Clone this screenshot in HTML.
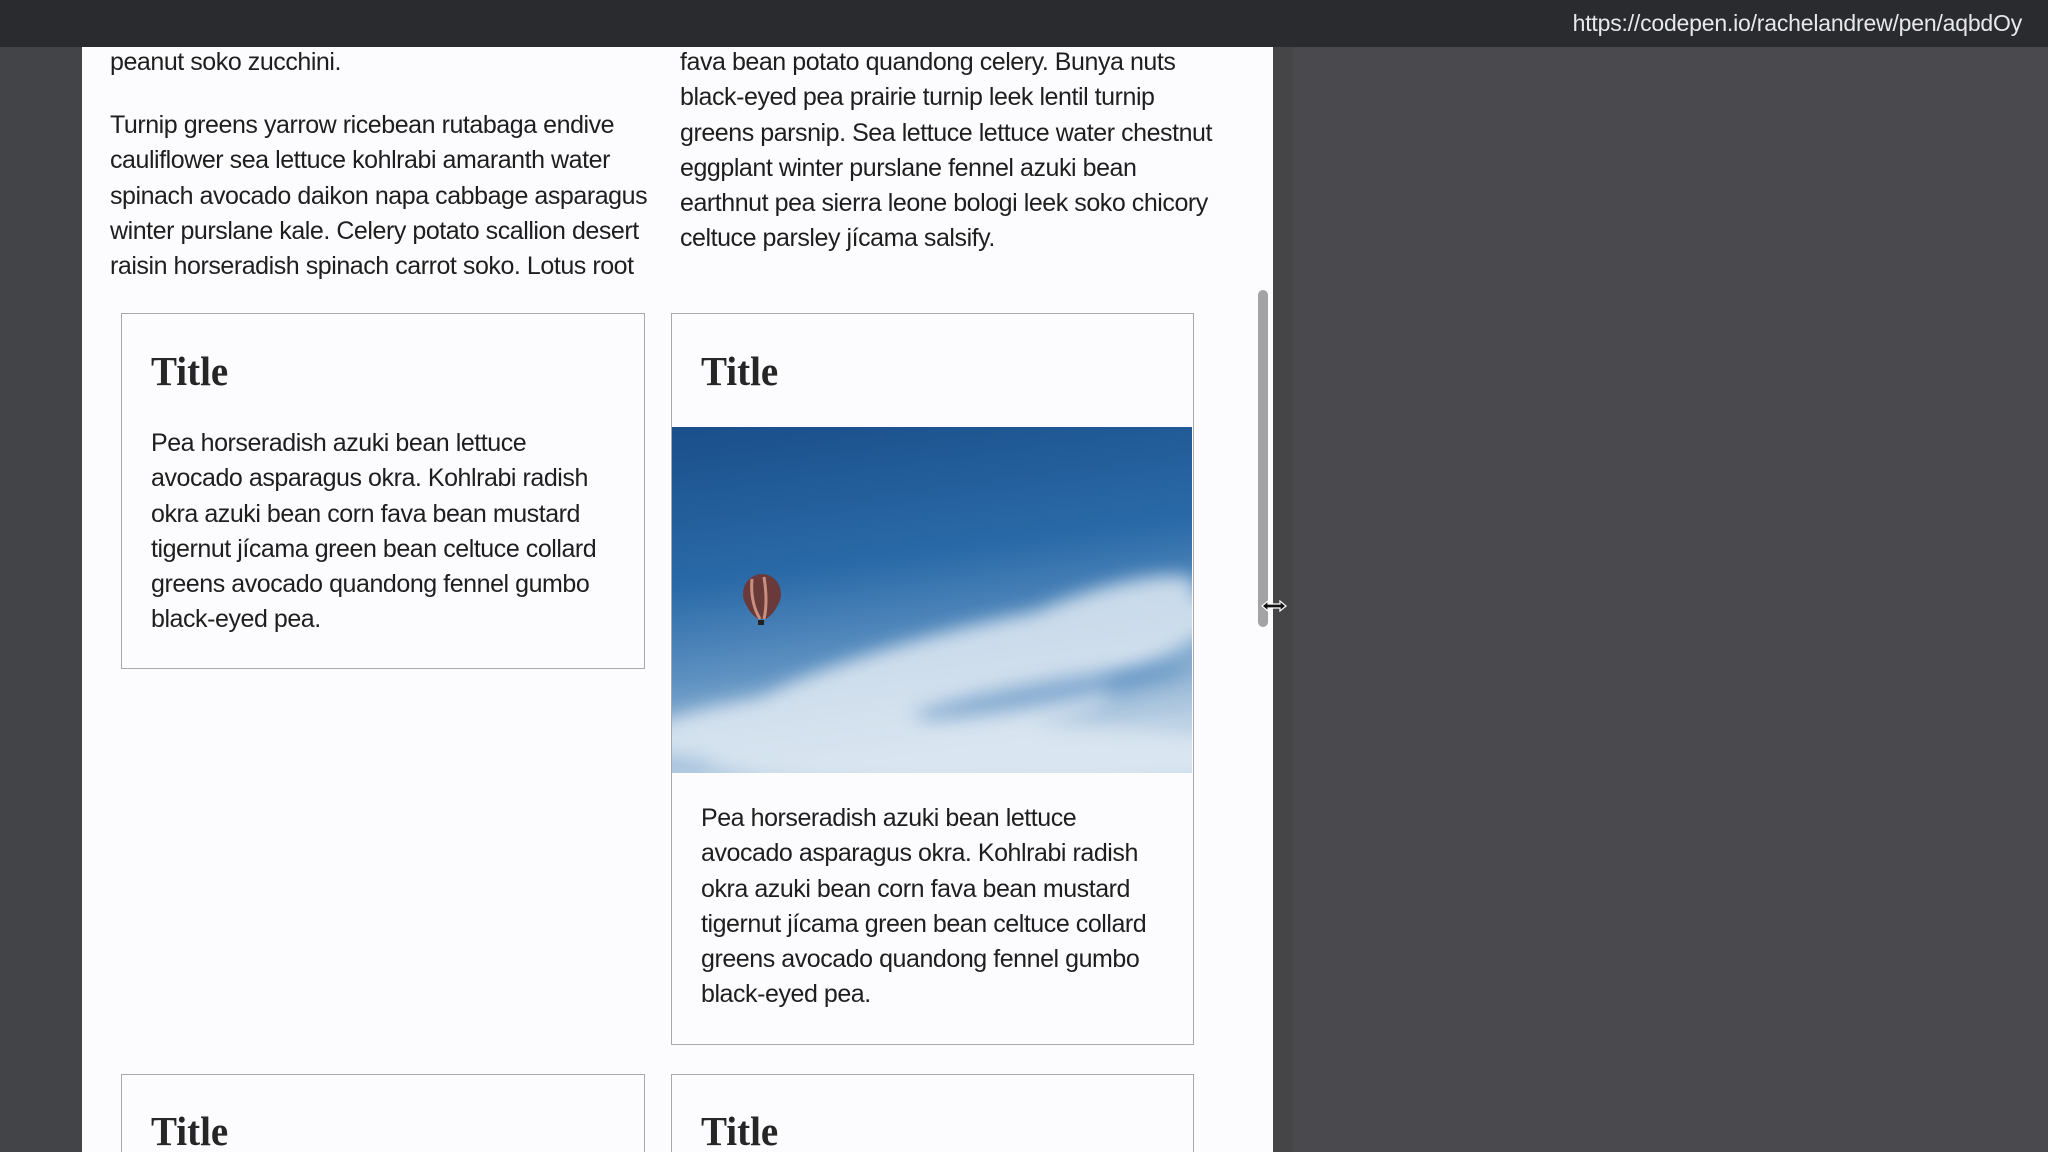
<!DOCTYPE html>
<html><head><meta charset="utf-8"><style>
*{margin:0;padding:0;box-sizing:border-box}
html,body{width:2048px;height:1152px;overflow:hidden}
body{background:#4a494d;position:relative;font-family:"Liberation Sans",sans-serif;color:#222}
#bar{position:absolute;left:0;top:0;width:2048px;height:47px;background:#2a2b2f}
#url{position:absolute;right:26px;top:10px;color:#e8e8ea;font-size:23px;letter-spacing:-0.2px}
#lstrip{position:absolute;left:0;top:47px;width:82px;height:1105px;background:#434447}
#page{position:absolute;left:82px;top:47px;width:1191px;height:1105px;background:#fcfbfd;overflow:hidden}
#rstrip{position:absolute;left:1273px;top:47px;width:20px;height:1105px;background:#454548}
.t{position:absolute;font-size:25px;line-height:35.3px;white-space:nowrap;letter-spacing:-0.45px;color:#1e1e1e}
.card{position:absolute;border:1.5px solid #a9a9ab;background:#fcfbfd}
.ti{position:absolute;font-family:"Liberation Serif",serif;font-weight:bold;font-size:41px;color:#262626;transform:scaleX(0.95);transform-origin:left;line-height:48px}
#thumb{position:absolute;left:1258px;top:290px;width:10px;height:337px;border-radius:5px;background:#a3a3a6}
</style></head><body>
<div id="bar"><div id="url">https://codepen.io/rachelandrew/pen/aqbdOy</div></div>
<div id="lstrip"></div>
<div id="rstrip"></div>
<div id="page"></div>
<div id="thumb"></div>

<div class="t" style="left:110px;top:45px">peanut soko zucchini.</div>
<div class="t" style="left:110px;top:108px">Turnip greens yarrow ricebean rutabaga endive<br>cauliflower sea lettuce kohlrabi amaranth water<br>spinach avocado daikon napa cabbage asparagus<br>winter purslane kale. Celery potato scallion desert<br>raisin horseradish spinach carrot soko. Lotus root</div>
<div class="t" style="left:680px;top:45px">fava bean potato quandong celery. Bunya nuts<br>black-eyed pea prairie turnip leek lentil turnip<br>greens parsnip. Sea lettuce lettuce water chestnut<br>eggplant winter purslane fennel azuki bean<br>earthnut pea sierra leone bologi leek soko chicory<br>celtuce parsley jícama salsify.</div>

<div class="card" style="left:121px;top:313px;width:524px;height:356px"></div>
<div class="ti" style="left:151px;top:347px">Title</div>
<div class="t" style="left:151px;top:426px">Pea horseradish azuki bean lettuce<br>avocado asparagus okra. Kohlrabi radish<br>okra azuki bean corn fava bean mustard<br>tigernut jícama green bean celtuce collard<br>greens avocado quandong fennel gumbo<br>black-eyed pea.</div>

<div class="card" style="left:671px;top:313px;width:523px;height:732px"></div>
<div class="ti" style="left:701px;top:347px">Title</div>
<svg style="position:absolute;left:672px;top:427px" width="520" height="346" viewBox="0 0 520 346">
<defs>
<linearGradient id="sky" x1="0" y1="0" x2="0.2" y2="1">
<stop offset="0" stop-color="#1a4f8a"/><stop offset="0.45" stop-color="#2a6aa8"/><stop offset="0.7" stop-color="#5b8fc0"/><stop offset="1" stop-color="#b9cfe3"/></linearGradient>
<filter id="bl"><feGaussianBlur stdDeviation="9"/></filter>
</defs>
<rect width="520" height="346" fill="url(#sky)"/>
<g filter="url(#bl)" fill="#dfe9f3" opacity="0.85">
<ellipse cx="300" cy="245" rx="260" ry="45" transform="rotate(-14 300 245)"/>
<ellipse cx="200" cy="290" rx="240" ry="35" transform="rotate(-6 200 290)"/>
<ellipse cx="420" cy="190" rx="110" ry="25" transform="rotate(-18 420 190)"/>
<ellipse cx="330" cy="330" rx="300" ry="30"/>
</g>
<g filter="url(#bl)" fill="#4f86bd" opacity="0.6">
<ellipse cx="380" cy="265" rx="140" ry="12" transform="rotate(-10 380 265)"/>
</g>
<ellipse cx="90" cy="167" rx="19" ry="20" fill="#6a3a3a"/>
<path d="M72 170 Q75 185 86 192 L94 192 Q105 185 108 170 Z" fill="#6a3a3a"/>
<path d="M80 152 Q78 175 88 192 M92 150 Q96 175 92 192" stroke="#c99080" stroke-width="3" fill="none"/>
<rect x="86" y="193" width="6" height="5" fill="#222"/>
</svg>
<div class="t" style="left:701px;top:801px">Pea horseradish azuki bean lettuce<br>avocado asparagus okra. Kohlrabi radish<br>okra azuki bean corn fava bean mustard<br>tigernut jícama green bean celtuce collard<br>greens avocado quandong fennel gumbo<br>black-eyed pea.</div>

<div class="card" style="left:121px;top:1074px;width:524px;height:78px;border-bottom:none"></div>
<div class="ti" style="left:151px;top:1107px">Title</div>
<div class="card" style="left:671px;top:1074px;width:523px;height:78px;border-bottom:none"></div>
<div class="ti" style="left:701px;top:1107px">Title</div>

<svg style="position:absolute;left:1260px;top:598px" width="28" height="16" viewBox="0 0 28 16">
<path d="M2 8 L8 3 L8 6 L20 6 L20 3 L26 8 L20 13 L20 10 L8 10 L8 13 Z" fill="#111" stroke="#fff" stroke-width="1.2"/>
</svg>
</body></html>
